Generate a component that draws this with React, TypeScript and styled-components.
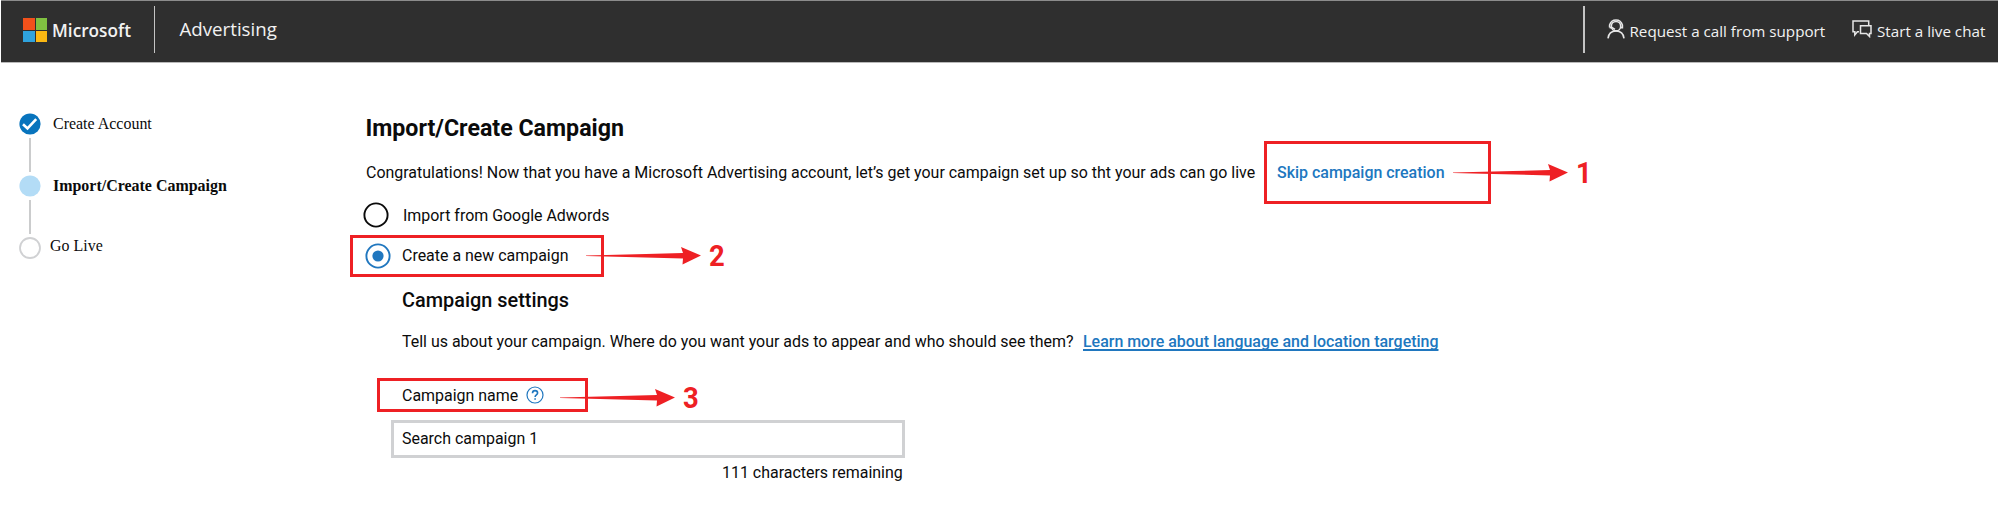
import React from "react";
import styled, { createGlobalStyle } from "styled-components";

const red = "#ee2024";
const blue = "#2077bf";

const GlobalStyle = createGlobalStyle`
  *, *::before, *::after { box-sizing: border-box; }
  body { margin: 0; background: #fff; color: #0b0b0b; }
  h1, h2, p, ol { margin: 0; padding: 0; }
`;

const Page = styled.div`
  width: 1998px;
  height: 506px;
  overflow: hidden;
  background: #fff;
  font-family: Roboto, "Liberation Sans", sans-serif;
`;

const Header = styled.header`
  display: flex;
  align-items: flex-start;
  height: 63px;
  margin-left: 1px;
  padding: 5px 0 0 22px;
  background: #2f2f2f;
  border-top: 1px solid #8c8c8c;
  border-bottom: 1px solid #b9b9b9;
  color: #f2f2f2;
  font-family: "Open Sans", "Noto Sans", sans-serif;
`;

const Logo = styled.div`
  display: grid;
  grid-template-columns: 11.5px 11.5px;
  grid-template-rows: 11.5px 11.5px;
  gap: 1px;
  margin: 12px 5px 0 0;
`;

const Tile = styled.i<{ $color: string }>`
  background: ${(p) => p.$color};
`;

const HeaderText = styled.span<{ $size: number; $weight?: number; $width: number; $top: number; $scale?: number }>`
  display: block;
  width: ${(p) => p.$width}px;
  margin-top: ${(p) => p.$top}px;
  font-size: ${(p) => p.$size}px;
  font-weight: ${(p) => p.$weight ?? 400};
  line-height: 26px;
  white-space: nowrap;
  transform: scaleX(${(p) => p.$scale ?? 1});
  transform-origin: left;
`;

const Divider = styled.div`
  width: 1.5px;
  height: 47px;
  background: #c4c4c4;
`;

const Product = styled.div`
  display: flex;
  flex: 1;
  padding-left: 24.5px;
`;

const Support = styled.div`
  display: flex;
  align-items: flex-start;
  width: 415px;
`;

const HeadsetIcon = styled.svg`
  width: 18px;
  height: 20px;
  margin: 13px 5px 0 22px;
`;

const ChatIcon = styled.svg`
  width: 20px;
  height: 18px;
  margin: 14px 5px 0 26.5px;
`;

const Body = styled.div`
  display: flex;
`;

const Steps = styled.ol`
  flex: none;
  width: 350px;
  padding: 50px 0 0 19px;
  list-style: none;
  font-family: "Liberation Serif", "Times New Roman", serif;
`;

const Step = styled.li<{ $active?: boolean }>`
  display: flex;
  align-items: center;
  height: 22px;
  font-size: 16.5px;
  font-weight: ${(p) => (p.$active ? 700 : 400)};
  line-height: 20px;
`;

const StepLabel = styled.span<{ $indent: number; $lift: number }>`
  margin: ${(p) => -p.$lift}px 0 0 ${(p) => p.$indent}px;
  white-space: nowrap;
  transform: scaleX(0.967);
  transform-origin: left;
`;

const StepMark = styled.svg`
  flex: none;
  width: 22px;
  height: 22px;
`;

const Connector = styled.li<{ $after: number }>`
  width: 2px;
  height: 34px;
  margin: 3px 0 ${(p) => p.$after}px 10px;
  background: #cbcccd;
`;

const Main = styled.main`
  display: flex;
  flex-direction: column;
  align-items: flex-start;
  padding-top: 52px;
`;

const Title = styled.h1`
  height: 26px;
  padding-left: 16px;
  font-size: 24px;
  font-weight: 700;
  line-height: 26px;
  white-space: nowrap;
  transform: scaleX(0.966);
  transform-origin: left;
`;

const Text = styled.span<{ $width?: number; $weight?: number; $lift?: number }>`
  display: block;
  flex: none;
  width: ${(p) => (p.$width ? `${p.$width}px` : "auto")};
  margin-top: ${(p) => -(p.$lift ?? 0)}px;
  font-size: 17px;
  font-weight: ${(p) => p.$weight ?? 400};
  line-height: 20px;
  white-space: nowrap;
  transform: scaleX(0.938);
  transform-origin: left;
`;

const LinkText = styled(Text)<{ $underline?: boolean }>`
  color: ${blue};
  text-decoration: ${(p) => (p.$underline ? "underline" : "none")};
  text-decoration-thickness: 1.6px;
  text-underline-offset: 2px;
  text-decoration-skip-ink: none;
`;

const IntroRow = styled.div`
  display: flex;
  align-items: center;
  padding-left: 15.5px;
`;

const Callout = styled.div<{ $width: number; $height: number; $pad: number }>`
  position: relative;
  display: flex;
  align-items: center;
  flex: none;
  width: ${(p) => p.$width}px;
  height: ${(p) => p.$height}px;
  padding-left: ${(p) => p.$pad}px;
  border: 3px solid ${red};
`;

const Pointer = styled.div<{ $left: number; $top: number }>`
  position: absolute;
  left: ${(p) => p.$left}px;
  top: ${(p) => p.$top}px;
  display: flex;
  align-items: center;
  gap: 8px;
  height: 18px;
  color: ${red};
  font-size: 29.5px;
  font-weight: 700;
  line-height: 30px;
`;

const Numeral = styled.span`
  margin-top: -1px;
  transform: scaleX(0.93);
  transform-origin: left;
`;

const OptionRow = styled.div`
  display: flex;
  align-items: center;
  height: 22px;
  margin-bottom: 9px;
  padding-left: 13px;
`;

const RadioMark = styled.svg<{ $gap: number }>`
  flex: none;
  width: 26px;
  height: 26px;
  margin-right: ${(p) => p.$gap}px;
`;

const Settings = styled.section`
  display: flex;
  flex-direction: column;
  align-items: flex-start;
  padding-left: 27px;
`;

const SettingsTitle = styled.h2`
  margin: 10px 0 18px 25px;
  font-size: 20.5px;
  font-weight: 500;
  line-height: 26px;
  white-space: nowrap;
  transform: scaleX(0.97);
  transform-origin: left;
`;

const SettingsIntro = styled.div`
  display: flex;
  margin: 0 0 27px 25px;
`;

const HelpIcon = styled.svg`
  width: 18px;
  height: 18px;
  margin-left: 6px;
`;

const NameField = styled.div`
  display: flex;
  align-items: center;
  width: 514px;
  height: 38px;
  margin: 7.5px 0 4px 14px;
  padding-left: 8px;
  border: 3px solid #d0d1d3;
`;

const Remaining = styled.div`
  padding-left: 345px;
`;

function Annotation({ label, left, top }: { label: string; left: number; top: number }) {
  return (
    <Pointer $left={left} $top={top}>
      <svg width="115" height="18" viewBox="0 0 115 18" fill={red}>
        <path d="M0 8.4 L60 7 L97 6 L95 0 L115 8.6 L96.5 17.5 L97 11.5 L40 9.9 L0 8.9Z" />
      </svg>
      <Numeral>{label}</Numeral>
    </Pointer>
  );
}

function Radio({ checked, gap }: { checked?: boolean; gap: number }) {
  return (
    <RadioMark $gap={gap} viewBox="0 0 26 26" fill="none">
      <circle cx="13" cy="13" r="11.6" stroke={checked ? blue : "#0b0b0b"} strokeWidth="1.9" />
      {checked && <circle cx="13" cy="13" r="5.6" fill={blue} />}
    </RadioMark>
  );
}

export default function App() {
  return (
    <Page>
      <GlobalStyle />
      <Header>
        <Logo>
          <Tile $color="#f1511b" />
          <Tile $color="#80c141" />
          <Tile $color="#2fa3de" />
          <Tile $color="#fbb813" />
        </Logo>
        <HeaderText $size={18.7} $weight={600} $width={101.5} $top={11} $scale={0.92}>Microsoft</HeaderText>
        <Divider />
        <Product>
          <HeaderText $size={18.7} $width={100} $top={10} $weight={500}>Advertising</HeaderText>
        </Product>
        <Support>
          <Divider />
          <HeadsetIcon viewBox="0 0 18 20" fill="none" stroke="#e6e6e6" strokeWidth="1.6">
            <circle cx="9" cy="7.2" r="4.7" />
            <path d="M2.6 8.6V6C3.6 2.6 5.9 1 9 1s5.4 1.6 6.4 5v2.6H13.6M2.6 8.6H5l3 1.8M1 19.3c.5-4.2 3.3-7.3 8-7.3s7.5 3.1 8 7.3" />
          </HeadsetIcon>
          <HeaderText $size={15.2} $width={196} $top={12} $weight={500}>Request a call from support</HeaderText>
          <ChatIcon viewBox="0 0 20 18" fill="none" stroke="#e6e6e6" strokeWidth="1.5">
            <path d="M7 11.8H5.4L2.8 15V11.8H1V1h15.7v4.5" />
            <path d="M8.5 5.7H19v7.8h-1.5v3l-3-3h-6z" />
          </ChatIcon>
          <HeaderText $size={15.2} $width={108} $top={12} $weight={500}>Start a live chat</HeaderText>
        </Support>
      </Header>
      <Body>
        <Steps>
          <Step>
            <StepMark viewBox="0 0 22 22">
              <circle cx="11" cy="11" r="10.6" fill="#0874bd" />
              <path d="M4 11.3l4.5 4.2 8.7-9.3" fill="none" stroke="#fff" strokeWidth="2.6" />
            </StepMark>
            <StepLabel $indent={11.5} $lift={0}>Create Account</StepLabel>
          </Step>
          <Connector $after={3} />
          <Step $active>
            <StepMark viewBox="0 0 22 22">
              <circle cx="11" cy="11" r="10.6" fill="#b3dcf6" />
            </StepMark>
            <StepLabel $indent={11.5} $lift={0}>Import/Create Campaign</StepLabel>
          </Step>
          <Connector $after={2.5} />
          <Step>
            <StepMark viewBox="0 0 22 22">
              <circle cx="11" cy="11" r="10" fill="#fff" stroke="#d0d1d3" strokeWidth="1.8" />
            </StepMark>
            <StepLabel $indent={9} $lift={3}>Go Live</StepLabel>
          </Step>
        </Steps>
        <Main>
          <Title>Import/Create Campaign</Title>
          <IntroRow>
            <Text $width={898.5} $lift={2}>
              Congratulations! Now that you have a Microsoft Advertising account, let’s get your campaign set up so tht your ads can go live
            </Text>
            <Callout $width={227} $height={63} $pad={10}>
              <LinkText $weight={500} $lift={2}>Skip campaign creation</LinkText>
              <Annotation label="1" left={186} top={20} />
            </Callout>
          </IntroRow>
          <OptionRow>
            <Radio gap={14} />
            <Text>Import from Google Adwords</Text>
          </OptionRow>
          <Callout $width={254} $height={42} $pad={11.5}>
            <Radio checked gap={11.5} />
            <Text $lift={2}>Create a new campaign</Text>
            <Annotation label="2" left={233} top={9} />
          </Callout>
          <Settings>
            <SettingsTitle>Campaign settings</SettingsTitle>
            <SettingsIntro>
              <Text $width={680.5}>
                Tell us about your campaign. Where do you want your ads to appear and who should see them?
              </Text>
              <LinkText $weight={500} $underline>Learn more about language and location targeting</LinkText>
            </SettingsIntro>
            <Callout $width={211} $height={34} $pad={22}>
              <Text $width={117.5}>Campaign name</Text>
              <HelpIcon viewBox="0 0 18 18" fill="none" stroke={blue}>
                <circle cx="9" cy="9" r="8" strokeWidth="1.2" />
                <path d="M6.5 7.2c0-1.700 1-2.600 2.500-2.600s2.600.9 2.600 2.300c0 1.900-2.500 2-2.500 4.100M9.100 12.200v1.600" strokeWidth="1.6" />
              </HelpIcon>
              <Annotation label="3" left={179.5} top={8} />
            </Callout>
            <NameField>
              <Text $lift={2}>Search campaign 1</Text>
            </NameField>
            <Remaining>
              <Text>111 characters remaining</Text>
            </Remaining>
          </Settings>
        </Main>
      </Body>
    </Page>
  );
}
